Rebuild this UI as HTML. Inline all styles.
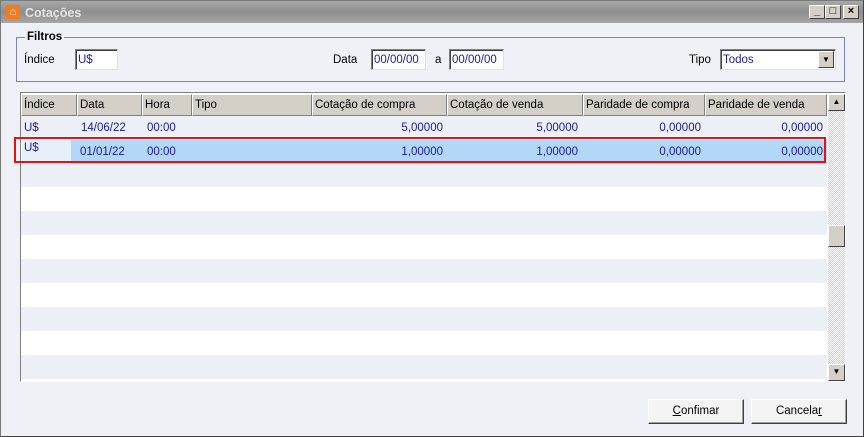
<!DOCTYPE html>
<html><head><style>
*{margin:0;padding:0;box-sizing:border-box}
body{width:864px;height:437px;overflow:hidden;font-family:"Liberation Sans",sans-serif;font-size:11.5px;color:#000;background:#f0f1f7;position:relative}
.abs{position:absolute}
.win{left:0;top:0;width:864px;height:437px;border:1px solid #7a7a7a;border-right-color:#404040;border-bottom-color:#404040}
.title{left:1px;top:1px;width:862px;height:22px;background:linear-gradient(#a8a8a8,#8e8e8e 50%,#a6a6a6);color:#e6e6e6;font-weight:bold;font-size:12.5px;line-height:24px;padding-left:24px}
.tb{top:5px;width:16px;height:14px;background:#d4d0c8;border:1px solid;border-color:#fff #404040 #404040 #fff;font-size:11px;line-height:11px;text-align:center;font-weight:bold;color:#000}
.inp{background:#fff;border:1px solid;border-color:#808080 #e0e0e0 #e0e0e0 #808080;height:21px;color:#1a1aa0;padding:4px 2px;font-size:11.5px;box-shadow:inset 1px 1px 0 #404040}
.hdr{top:94px;height:22px;background:#d4d0c8;border:1px solid;border-color:#fff #808080 #808080 #fff;line-height:21px;padding-left:2px;color:#000}
.cell{height:24px;line-height:25px;color:#1a1aa0;white-space:nowrap}
.r{text-align:right}
.btn{top:399px;height:25px;background:#f4f4f4;border:1px solid;border-color:#fff #404040 #404040 #fff;box-shadow:inset -1px -1px 0 #a0a0a0;text-align:center;line-height:23px}
</style></head><body>
<div class="abs win"></div>
<div class="abs title">Cotações</div>
<div class="abs" style="left:6px;top:5px;width:14px;height:14px;background:#f47a20;color:#fff;font-size:11px;line-height:14px;text-align:center;font-weight:bold">⌂</div>
<div class="abs tb" style="left:809px">_</div>
<div class="abs tb" style="left:825px">□</div>
<div class="abs tb" style="left:843px">×</div>

<div class="abs" style="left:16px;top:37px;width:829px;height:45px;border:1px solid #8080c8"></div>
<div class="abs" style="left:25px;top:31px;background:#f0f1f7;font-weight:bold;padding:0 2px">Filtros</div>
<div class="abs" style="left:24px;top:54px">Índice</div>
<div class="abs inp" style="left:75px;top:49px;width:43px">U$</div>
<div class="abs" style="left:333px;top:54px">Data</div>
<div class="abs inp" style="left:371px;top:49px;width:55px">00/00/00</div>
<div class="abs" style="left:435px;top:54px">a</div>
<div class="abs inp" style="left:449px;top:49px;width:55px">00/00/00</div>
<div class="abs" style="left:689px;top:54px">Tipo</div>
<div class="abs inp" style="left:720px;top:49px;width:116px">Todos</div>
<div class="abs" style="left:818px;top:51px;width:16px;height:17px;background:#d4d0c8;border:1px solid;border-color:#fff #404040 #404040 #fff;font-size:8px;text-align:center;line-height:15px">▼</div>

<div class="abs" style="left:20px;top:92px;width:826px;height:290px;border:1px solid;border-color:#808080 #fff #fff #808080;background:#fff;overflow:hidden">
 <div class="abs" style="left:0;top:0;width:806px;height:288px;background:repeating-linear-gradient(#fff 0 24px,#eef0f7 24px 48px);background-position:0 -2px"></div>
</div>
<div class="abs hdr" style="left:21px;width:56px">Índice</div>
<div class="abs hdr" style="left:77px;width:65px">Data</div>
<div class="abs hdr" style="left:142px;width:50px">Hora</div>
<div class="abs hdr" style="left:192px;width:120px">Tipo</div>
<div class="abs hdr" style="left:312px;width:135px">Cotação de compra</div>
<div class="abs hdr" style="left:447px;width:136px">Cotação de venda</div>
<div class="abs hdr" style="left:583px;width:122px">Paridade de compra</div>
<div class="abs hdr" style="left:705px;width:122px">Paridade de venda</div>

<div class="abs" style="left:22px;top:140px;width:805px;height:24px;background:#b3d7f7"></div>
<div class="abs" style="left:22px;top:140px;width:49px;height:24px;background:#e6f0fb"></div>

<div class="abs cell" style="left:24px;top:116px">U$</div>
<div class="abs cell" style="left:81px;top:116px">14/06/22</div>
<div class="abs cell" style="left:147px;top:116px">00:00</div>
<div class="abs cell r" style="left:312px;top:116px;width:131px">5,00000</div>
<div class="abs cell r" style="left:447px;top:116px;width:131px">5,00000</div>
<div class="abs cell r" style="left:583px;top:116px;width:118px">0,00000</div>
<div class="abs cell r" style="left:705px;top:116px;width:118px">0,00000</div>

<div class="abs cell" style="left:24px;top:136px">U$</div>
<div class="abs cell" style="left:80px;top:140px">01/01/22</div>
<div class="abs cell" style="left:147px;top:140px">00:00</div>
<div class="abs cell r" style="left:312px;top:140px;width:131px">1,00000</div>
<div class="abs cell r" style="left:447px;top:140px;width:131px">1,00000</div>
<div class="abs cell r" style="left:583px;top:140px;width:118px">0,00000</div>
<div class="abs cell r" style="left:705px;top:140px;width:118px">0,00000</div>
<div class="abs" style="left:14px;top:137px;width:812px;height:26px;border:2px solid #e81010"></div>

<div class="abs" style="left:828px;top:94px;width:17px;height:287px;background:repeating-conic-gradient(#d4d0c8 0 25%,#fff 0 50%) 0 0/2px 2px"></div>
<div class="abs" style="left:828px;top:94px;width:17px;height:17px;background:#d4d0c8;border:1px solid;border-color:#fff #404040 #404040 #fff;font-size:8px;text-align:center;line-height:14px">▲</div>
<div class="abs" style="left:828px;top:225px;width:17px;height:22px;background:#d4d0c8;border:1px solid;border-color:#fff #404040 #404040 #fff"></div>
<div class="abs" style="left:828px;top:364px;width:17px;height:17px;background:#d4d0c8;border:1px solid;border-color:#fff #404040 #404040 #fff;font-size:8px;text-align:center;line-height:14px">▼</div>

<div class="abs btn" style="left:648px;width:96px"><u>C</u>onfimar</div>
<div class="abs btn" style="left:751px;width:96px">Cancela<u>r</u></div>
</body></html>
